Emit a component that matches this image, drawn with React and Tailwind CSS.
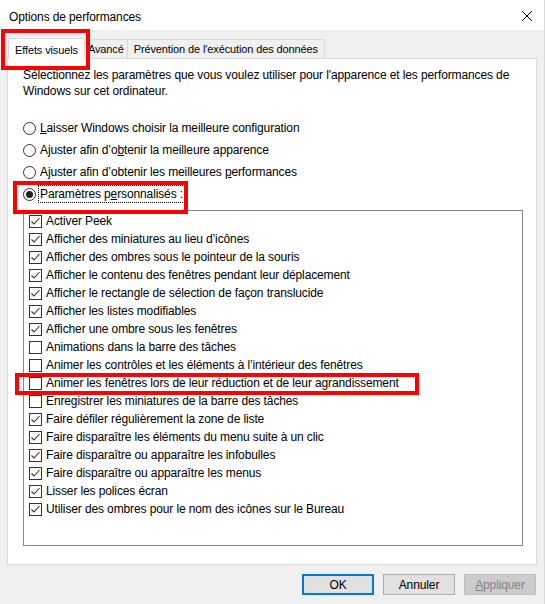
import React from "react";

const ITEMS = [
  ["Activer Peek", true],
  ["Afficher des miniatures au lieu d’icônes", true],
  ["Afficher des ombres sous le pointeur de la souris", true],
  ["Afficher le contenu des fenêtres pendant leur déplacement", true],
  ["Afficher le rectangle de sélection de façon translucide", true],
  ["Afficher les listes modifiables", true],
  ["Afficher une ombre sous les fenêtres", true],
  ["Animations dans la barre des tâches", false],
  ["Animer les contrôles et les éléments à l’intérieur des fenêtres", false],
  ["Animer les fenêtres lors de leur réduction et de leur agrandissement", false],
  ["Enregistrer les miniatures de la barre des tâches", false],
  ["Faire défiler régulièrement la zone de liste", true],
  ["Faire disparaître les éléments du menu suite à un clic", true],
  ["Faire disparaître ou apparaître les infobulles", true],
  ["Faire disparaître ou apparaître les menus", true],
  ["Lisser les polices écran", true],
  ["Utiliser des ombres pour le nom des icônes sur le Bureau", true],
];

export default function App() {
  return (
    <div
      className="relative w-[545px] h-[604px] bg-[#f0f0f0] border-r border-[#dadada] text-[12px] tracking-[-0.12px] text-black leading-[16px] overflow-hidden"
      style={{ fontFamily: '"Segoe UI", "Liberation Sans", Arial, sans-serif' }}
    >
      {/* Title bar */}
      <div className="h-[30px] bg-white flex items-center justify-between pl-[9px] pr-[11px] pt-[3px]">
        <span className="text-[12px]">Options de performances</span>
        <svg width="12" height="12" viewBox="0 0 12 12" className="-mt-[2px]">
          <path d="M1 1 L11 11 M11 1 L1 11" stroke="#000" strokeWidth="1" />
        </svg>
      </div>

      <div className="px-[7px] pt-[8px]">
        {/* Tabs */}
        <div className="flex items-end h-[20px] text-[11px]">
          <div className="h-[21px] -mb-[1px] z-10 bg-white border border-b-0 border-[#d9d9d9] px-[6px] pt-[1px] flex items-center ml-[1px]">
            Effets visuels
          </div>
          <div className="h-[19px] bg-[#f0f0f0] border border-l-0 border-b-0 border-[#d9d9d9] px-[3px] flex items-center">
            Avancé
          </div>
          <div className="h-[19px] bg-[#f0f0f0] border border-l-0 border-b-0 border-[#d9d9d9] px-[6px] flex items-center">
            Prévention de l'exécution des données
          </div>
        </div>

        {/* Panel */}
        <div className="bg-white border border-[#d9d9d9] h-[507px] pl-[15px] pr-[13px] pt-[8px]">
          <p>Sélectionnez les paramètres que vous voulez utiliser pour l'apparence et les performances de</p>
          <p>Windows sur cet ordinateur.</p>

          <div className="mt-[18px] flex flex-col">
            <Radio>
              <u>L</u>aisser Windows choisir la meilleure configuration
            </Radio>
            <Radio>
              Ajuster afin d’o<u>b</u>tenir la meilleure apparence
            </Radio>
            <Radio>
              Ajuster afin d’obtenir les meilleures <u>p</u>erformances
            </Radio>
            <Radio checked focus>
              Paramètres p<u>e</u>rsonnalisés :
            </Radio>
          </div>

          <div className="mt-[5px] h-[336px] border border-[#828790] pl-[5px] pt-[1px]">
            {ITEMS.map(([label, on]) => (
              <div key={label} className="h-[18px] flex items-center gap-[4px]">
                <Check on={on} />
                <span>{label}</span>
              </div>
            ))}
          </div>
        </div>

        {/* Buttons */}
        <div className="flex justify-end gap-[9px] mt-[9px] pr-[1px]">
          <button className="w-[72px] h-[21px] bg-[#e1e1e1] border-2 border-[#0078d7] flex items-center justify-center">
            OK
          </button>
          <button className="w-[72px] h-[21px] bg-[#e1e1e1] border border-[#adadad] flex items-center justify-center">
            Annuler
          </button>
          <button className="w-[72px] h-[21px] bg-[#cccccc] border border-[#bfbfbf] text-[#838383] flex items-center justify-center">
            <span>
              <u>A</u>ppliquer
            </span>
          </button>
        </div>
      </div>

      {/* Red annotation frames */}
      <div className="absolute left-[1px] top-[29px] w-[89px] h-[41px] border-[4px] border-[#ff0000]" />
      <div className="absolute left-[13px] top-[181px] w-[175px] h-[33px] border-[4px] border-[#ff0000]" />
      <div className="absolute left-[15px] top-[373px] w-[404px] h-[22px] border-[4px] border-[#ff0000]" />
    </div>
  );
}

const Radio = ({ checked, focus, children }) => (
  <div className="h-[22px] flex items-center">
    <span className="w-[13px] h-[13px] rounded-full border border-[#333] bg-white flex items-center justify-center shrink-0">
      {checked && <span className="w-[7px] h-[7px] rounded-full bg-[#222]" />}
    </span>
    <span
      className={`ml-[2px] px-[1px] ${
        focus ? "border border-dotted border-black" : "border border-transparent"
      }`}
    >
      {children}
    </span>
  </div>
);

const Check = ({ on }) => (
  <span className="w-[13px] h-[13px] border border-[#333] bg-white shrink-0 flex items-center justify-center">
    {on && (
      <svg width="11" height="11" viewBox="0 0 11 11">
        <path d="M1.5 5.5 L4 8 L9.5 2" fill="none" stroke="#333" strokeWidth="1.1" />
      </svg>
    )}
  </span>
);
